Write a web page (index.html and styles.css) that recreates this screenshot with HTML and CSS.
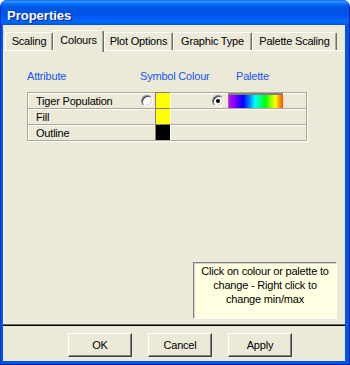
FILE: index.html
```html
<!DOCTYPE html>
<html>
<head>
<meta charset="utf-8">
<link rel="stylesheet" href="styles.css">
</head>
<body>
<div class="window">
  <div class="titlebar"><span class="title">Properties</span></div>
  <div class="client">
    <div class="tabs">
      <div class="tab t-scaling">Scaling</div>
      <div class="tab t-colours selected">Colours</div>
      <div class="tab t-plot">Plot Options</div>
      <div class="tab t-graphic">Graphic Type</div>
      <div class="tab t-palette">Palette Scaling</div>
    </div>
    <div class="panel">
      <div class="header">
        <span class="h-attr">Attribute</span>
        <span class="h-sym">Symbol Colour</span>
        <span class="h-pal">Palette</span>
      </div>
      <div class="table">
        <div class="row">
          <div class="cell label"><span class="name">Tiger Population</span><span class="radio"></span></div>
          <div class="swatch yellow"></div>
          <div class="cell pal"><span class="radio checked"></span><span class="rainbow"></span></div>
        </div>
        <div class="row">
          <div class="cell label"><span class="name">Fill</span></div>
          <div class="swatch yellow"></div>
          <div class="cell pal"></div>
        </div>
        <div class="row">
          <div class="cell label"><span class="name">Outline</span></div>
          <div class="swatch black"></div>
          <div class="cell pal"></div>
        </div>
      </div>
      <div class="hint">Click on colour or palette to<br>change - Right click to<br>change min/max</div>
    </div>
    <div class="sep"></div>
    <div class="footer">
      <div class="btn">OK</div>
      <div class="btn">Cancel</div>
      <div class="btn">Apply</div>
    </div>
  </div>
</div>
</body>
</html>
```

FILE: styles.css
```css
html, body {
  margin: 0;
  padding: 0;
  background: #ffffff;
}
body {
  font-family: "Liberation Sans", Arial, sans-serif;
  font-size: 11px;
  letter-spacing: -0.2px;
  color: #000;
}
.window {
  width: 350px;
  height: 365px;
  box-sizing: border-box;
  display: flex;
  flex-direction: column;
  background: #0055EA;
  border-radius: 7px 7px 0 0;
  border-left: 1px solid #0831D9;
  border-right: 1px solid #001EA0;
  border-bottom: 1px solid #001EA0;
  overflow: hidden;
}
.titlebar {
  height: 25px;
  flex: none;
  display: flex;
  align-items: center;
  padding-left: 6px;
  background: linear-gradient(#0058EE 0%, #3A93FF 4%, #288EFF 8%, #127DFF 12%, #036FFC 16%, #0262EE 22%, #0057E5 30%, #0054E3 40%, #0055EB 60%, #005BF5 72%, #026AFE 84%, #0062EF 92%, #0052D6 100%);
}
.title {
  color: #fff;
  font-weight: bold;
  font-size: 13px;
  letter-spacing: 0;
  text-shadow: 1px 1px 0 #0A1E8C;
  margin-top: 5px;
}
.client {
  flex: 1;
  margin: 0 4px 3px 2px;
  background: #ECE9D8;
  display: flex;
  flex-direction: column;
}
.tabs {
  height: 25px;
  box-sizing: border-box;
  padding: 7px 0 0 2px;
  display: flex;
  align-items: flex-start;
  flex: none;
}
.tab {
  height: 18px;
  box-sizing: border-box;
  border-top: 1px solid #fff;
  border-left: 1px solid #fff;
  border-right: 1px solid #716F64;
  box-shadow: inset -1px 0 0 #ACA899;
  border-radius: 2px 2px 0 0;
  display: flex;
  align-items: center;
  justify-content: center;
  padding-bottom: 1px;
  white-space: nowrap;
}
.t-scaling { width: 48px; }
.t-colours { width: 51px; }
.t-plot { width: 69px; }
.t-graphic { width: 79px; }
.t-palette { width: 85px; }
.tab.selected {
  height: 22px;
  margin-top: -2px;
  margin-bottom: -1px;
  background: #ECE9D8;
  position: relative;
  z-index: 1;
  padding-bottom: 4px;
}
.panel {
  flex: 1;
  border-top: 1px solid #fff;
  border-left: 1px solid #fff;
  display: flex;
  flex-direction: column;
  padding: 19px 8px 5px 23px;
  min-height: 0;
}
.header {
  height: 13px;
  display: flex;
  color: #1556F5;
  line-height: 13px;
}
.h-attr { width: 113px; }
.h-sym { width: 96px; }
.table {
  margin-top: 9px;
  width: 280px;
  box-sizing: border-box;
  border-right: 1px solid #ACA899;
  border-bottom: 1px solid #ACA899;
  box-shadow: 1px 1px 0 #fff;
}
.row {
  display: grid;
  grid-template-columns: 128px 16px 135px;
  height: 16px;
}
.cell {
  box-sizing: border-box;
  border-top: 1px solid #ACA899;
  border-left: 1px solid #ACA899;
  box-shadow: inset 1px 1px 0 #fff;
  display: flex;
  align-items: center;
}
.label {
  padding-left: 8px;
  justify-content: space-between;
  padding-right: 2px;
}
.name { line-height: 14px; }
.swatch {
  box-sizing: border-box;
  border-top: 1px solid #808080;
  border-left: 1px solid #808080;
  border-right: 1px solid #fff;
}
.yellow { background: #FFFF00; }
.black { background: #000; }
.pal {
  border-left: none;
  box-shadow: inset 0 1px 0 #fff;
  padding-left: 41px;
}
.radio {
  width: 12px;
  height: 12px;
  box-sizing: border-box;
  border-radius: 50%;
  border: 1px solid;
  border-color: #808080 #fff #fff #808080;
  box-shadow: inset 1px 1px 0 #404040, inset -1px -1px 0 #D4D0C8;
  background: #fff;
  display: flex;
  align-items: center;
  justify-content: center;
  flex: none;
}
.radio.checked::after {
  content: "";
  width: 4px;
  height: 4px;
  border-radius: 50%;
  background: #000;
}
.rainbow {
  margin-left: 4px;
  width: 55px;
  height: 15px;
  box-sizing: border-box;
  border-top: 2px solid #808080;
  border-left: 1px solid #808080;
  background: linear-gradient(to right, #D000FF 0%, #6000FF 14%, #0000FF 26%, #0080FF 38%, #00FFFF 48%, #00FF80 58%, #00FF00 68%, #A0FF00 78%, #FFFF00 86%, #FF9000 94%, #FF5000 100%);
  align-self: flex-end;
}
.hint {
  margin-top: auto;
  align-self: flex-end;
  width: 144px;
  height: 57px;
  box-sizing: border-box;
  background: #FFFFE1;
  border: 1px solid;
  border-color: #808080 #fff #fff #808080;
  box-shadow: inset 1px 1px 0 #D4D0C8;
  text-align: center;
  line-height: 14px;
  padding-top: 1px;
}
.sep {
  height: 1px;
  flex: none;
  background: #000;
  border-top: 1px solid #716F64;
}
.footer {
  height: 35px;
  flex: none;
  box-sizing: border-box;
  padding: 7px 0 0 65px;
  display: flex;
  gap: 16px;
}
.btn {
  width: 64px;
  height: 24px;
  box-sizing: border-box;
  border: 1px solid;
  border-color: #fff #404040 #404040 #fff;
  box-shadow: inset -1px -1px 0 #808080;
  display: flex;
  align-items: center;
  justify-content: center;
}
```
